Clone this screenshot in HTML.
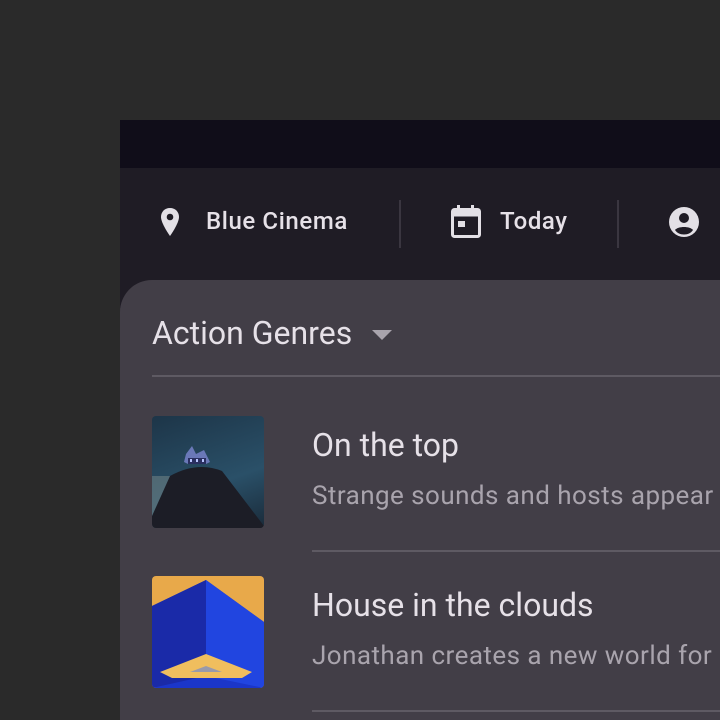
<!DOCTYPE html>
<html style="overflow:hidden"><head><style>
html,body{margin:0;width:720px;height:720px;overflow:hidden}
body{background:#2a2a2a;position:relative;font-family:"Roboto","Liberation Sans",sans-serif}
.top{position:absolute;left:120px;top:120px;width:600px;height:48px;background:#100d19}
.nav{position:absolute;left:120px;top:168px;width:600px;height:140px;background:#1f1c25}
.card{position:absolute;left:120px;top:280px;width:600px;height:440px;background:#423e47;border-radius:32px 0 0 0}
.t{position:absolute;color:#e6e1e8;white-space:nowrap}
.nv{font-size:24px;font-weight:500;letter-spacing:0.6px;top:207px}
.vl{position:absolute;top:200px;width:2px;height:48px;background:#3a3640}
.hl{position:absolute;height:2px;background:#5e5a63;left:152px;right:0}
.ti{font-size:32px;color:#e6e1e8}
.sub{font-size:26px;color:#a9a4ad;letter-spacing:0.45px}
.img{position:absolute;left:152px;width:112px;height:112px;border-radius:4px;overflow:hidden}
</style></head><body>
<div class="top"></div>
<div class="nav"></div>
<svg style="position:absolute;left:158px;top:206px" width="24" height="32" viewBox="0 0 24 32"><path d="M12 2C6.5 2 3 6 3 11c0 6.5 9 19 9 19s9-12.5 9-19C21 6 17.5 2 12 2z" fill="#e3e0e6"/><circle cx="12" cy="11" r="3.3" fill="#1f1c25"/></svg>
<div class="t nv" style="left:206px">Blue Cinema</div>
<div class="vl" style="left:399px"></div>
<svg style="position:absolute;left:450px;top:205px" width="32" height="34" viewBox="0 0 32 34"><rect x="7" y="0" width="3" height="6" fill="#e3e0e6"/><rect x="21" y="0" width="3" height="6" fill="#e3e0e6"/><rect x="2.5" y="4.5" width="27" height="27" rx="2" fill="none" stroke="#e3e0e6" stroke-width="3"/><rect x="2.5" y="4.5" width="27" height="7" fill="#e3e0e6"/><rect x="8" y="16" width="7" height="6" fill="#e3e0e6"/></svg>
<div class="t nv" style="left:500px">Today</div>
<div class="vl" style="left:617px"></div>
<svg style="position:absolute;left:668px;top:206px" width="32" height="32" viewBox="0 0 32 32"><circle cx="16" cy="16" r="15" fill="#e3e0e6"/><circle cx="16" cy="12" r="5" fill="#1f1c25"/><path d="M7 24c3-4 15-4 18 0c-2 3-5 4.5-9 4.5S9 27 7 24z" fill="#1f1c25"/></svg>
<div class="card"></div>
<div class="t ti" style="left:152px;top:314px">Action Genres</div>
<svg style="position:absolute;left:371px;top:328px" width="22" height="12"><path d="M1 2h20l-10 10z" fill="#a9a4ad"/></svg>
<div class="hl" style="top:375px"></div>
<div class="img" style="top:416px;background:linear-gradient(160deg,#1d3548 0%,#2a5068 60%,#1a2b3a 100%)">
<svg width="112" height="112" viewBox="0 0 112 112"><path d="M0 100 L18 60 Q45 45 70 55 L112 110 L112 112 L0 112z" fill="#1c1d26"/><path d="M0 100 L0 60 L18 60z" fill="#7a8a8a" opacity=".5"/><path d="M32 46 L34 38 L40 30 L44 38 L52 34 L58 46 L54 48 L36 48z" fill="#6a78b8"/><rect x="36" y="42" width="18" height="6" fill="#2a2f60"/><rect x="38" y="43" width="2" height="3" fill="#b8c4ff"/><rect x="44" y="43" width="2" height="3" fill="#b8c4ff"/><rect x="50" y="43" width="2" height="3" fill="#b8c4ff"/></svg></div>
<div class="t ti" style="left:312px;top:426px">On the top</div>
<div class="t sub" style="left:312px;top:481px">Strange sounds and hosts appear</div>
<div class="hl" style="top:550px;left:312px"></div>
<div class="img" style="top:576px;background:#e8a94a">
<svg width="112" height="112" viewBox="0 0 112 112"><path d="M0 30 L54 4 L112 46 L112 112 L0 112z" fill="#1b36c9"/><path d="M54 4 L112 46 L112 112 L54 100z" fill="#2145e0"/><path d="M54 4 L0 30 L0 112 L54 100z" fill="#1a2aa8"/><path d="M8 96 L54 78 L100 96 L90 102 L20 102z" fill="#f0be5e"/><path d="M38 96 L54 90 L70 96z" fill="#9a9aaa"/></svg></div>
<div class="t ti" style="left:312px;top:586px">House in the clouds</div>
<div class="t sub" style="left:312px;top:641px">Jonathan creates a new world for</div>
<div class="hl" style="top:710px;left:312px"></div>
</body></html>
